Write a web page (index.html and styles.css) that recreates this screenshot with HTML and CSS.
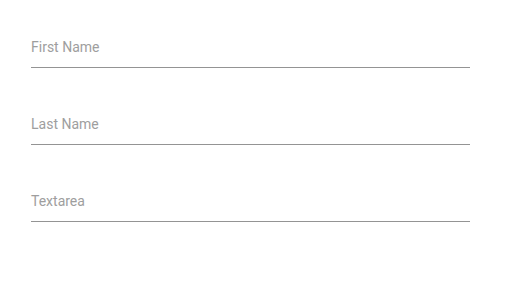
FILE: index.html
```html
<!DOCTYPE html>
<html>
<head>
<meta charset="utf-8">
<link rel="stylesheet" href="styles.css">
</head>
<body>
<form class="form">
  <div class="field"><span class="label">First Name</span></div>
  <div class="field"><span class="label">Last Name</span></div>
  <div class="field"><span class="label">Textarea</span></div>
</form>
</body>
</html>
```
FILE: styles.css
```css
html, body {
  margin: 0;
  padding: 0;
  background: #ffffff;
}
.form {
  display: flex;
  flex-direction: column;
  gap: 46px;
  padding: 37px 0 0 31px;
  width: 439px;
}
.field {
  border-bottom: 1px solid #949494;
  padding-bottom: 10px;
}
.label {
  display: block;
  font-family: Roboto, "Noto Sans", sans-serif;
  font-size: 14px;
  line-height: 20px;
  color: #9e9e9e;
}
```
